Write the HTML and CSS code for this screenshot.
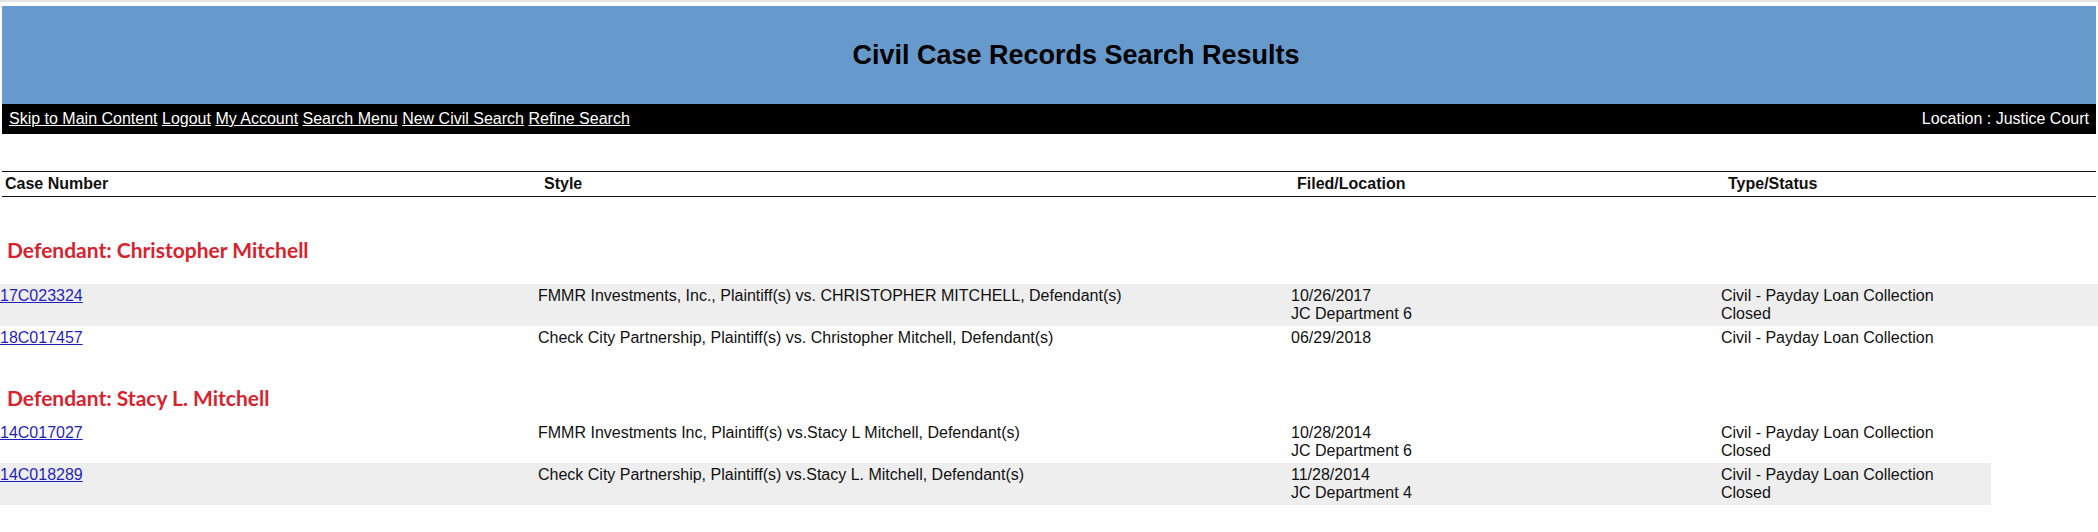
FILE: index.html
```html
<!DOCTYPE html>
<html lang="en">
<head>
    <meta charset="UTF-8">
    <meta name="viewport" content="width=device-width, initial-scale=1.0">
    <title>Civil Case Records Search Results</title>
    <link rel="stylesheet" href="styles.css">
</head>
<body>
    <div class="page">
        <div class="banner">
            <h1>Civil Case Records Search Results</h1>
        </div>

        <div class="nav">
            <div class="nav-links">
                <a href="#main">Skip to Main Content</a>
                <a href="#">Logout</a>
                <a href="#">My Account</a>
                <a href="#">Search Menu</a>
                <a href="#">New Civil Search</a>
                <a href="#">Refine Search</a>
            </div>
            <div class="location">Location : Justice Court</div>
        </div>
    </div>

    <div class="results" id="main">
        <div class="results-head">
            <div class="cell">Case Number</div>
            <div class="cell">Style</div>
            <div class="cell">Filed/Location</div>
            <div class="cell">Type/Status</div>
        </div>

        <div class="group group-first">
            <h2 class="defendant">Defendant: Christopher Mitchell</h2>

            <div class="row row-alt">
                <div class="cell"><a href="#">17C023324</a></div>
                <div class="cell">FMMR Investments, Inc., Plaintiff(s) vs. CHRISTOPHER MITCHELL, Defendant(s)</div>
                <div class="cell">10/26/2017<br>JC Department 6</div>
                <div class="cell">Civil - Payday Loan Collection<br>Closed</div>
            </div>
            <div class="row">
                <div class="cell"><a href="#">18C017457</a></div>
                <div class="cell">Check City Partnership, Plaintiff(s) vs. Christopher Mitchell, Defendant(s)</div>
                <div class="cell">06/29/2018</div>
                <div class="cell">Civil - Payday Loan Collection</div>
            </div>
        </div>

        <div class="group">
            <h2 class="defendant">Defendant: Stacy L. Mitchell</h2>

            <div class="row">
                <div class="cell"><a href="#">14C017027</a></div>
                <div class="cell">FMMR Investments Inc, Plaintiff(s) vs.Stacy L Mitchell, Defendant(s)</div>
                <div class="cell">10/28/2014<br>JC Department 6</div>
                <div class="cell">Civil - Payday Loan Collection<br>Closed</div>
            </div>
            <div class="row row-alt row-short">
                <div class="cell"><a href="#">14C018289</a></div>
                <div class="cell">Check City Partnership, Plaintiff(s) vs.Stacy L. Mitchell, Defendant(s)</div>
                <div class="cell">11/28/2014<br>JC Department 4</div>
                <div class="cell">Civil - Payday Loan Collection<br>Closed</div>
            </div>
        </div>
    </div>
</body>
</html>
```

FILE: styles.css
```css
/* Reset */
* {
    margin: 0;
    padding: 0;
    box-sizing: border-box;
}

body {
    font-family: 'Liberation Sans', Arial, sans-serif;
    font-size: 16px;
    color: #111;
    background: #fff;
    border-top: 2px solid #e4e4e4;
}

.page {
    padding: 4px 2px 0;
}

/* Blue title banner */
.banner {
    height: 98px;
    background: #6699cc;
    display: flex;
    align-items: center;
    justify-content: center;
    padding-left: 54px;
}

.banner h1 {
    font-size: 27px;
    font-weight: bold;
    color: #000;
}

/* Black nav bar */
.nav {
    height: 30px;
    background: #000;
    color: #fff;
    display: flex;
    align-items: center;
    justify-content: space-between;
    padding: 0 7px 0 7px;
}

.nav a {
    color: #fff;
    text-decoration: underline;
}

/* Results */
.results {
    margin-top: 37px;
}

.results-head {
    display: grid;
    grid-template-columns: 539px 753px 431px 1fr;
    margin: 0 2px;
    border-top: 1px solid #111;
    border-bottom: 1px solid #111;
    font-weight: bold;
    line-height: 18px;
}

.results-head .cell {
    padding: 3px 0 3px 3px;
}

.defendant {
    font-family: Lato, 'Noto Sans', sans-serif;
    font-size: 21px;
    font-weight: bold;
    color: #d8232f;
    line-height: 25px;
    padding-left: 7px;
    margin: 35px 0 11px;
}

.group-first .defendant {
    margin: 40px 0 22px;
}

.row {
    display: grid;
    grid-template-columns: 538px 753px 430px 1fr;
    line-height: 18px;
    padding: 3px 0;
}

.row-alt {
    background: #eeeeee;
}

.row-short {
    width: 1991px;
}

.row a {
    color: #1f1fbf;
}
```
